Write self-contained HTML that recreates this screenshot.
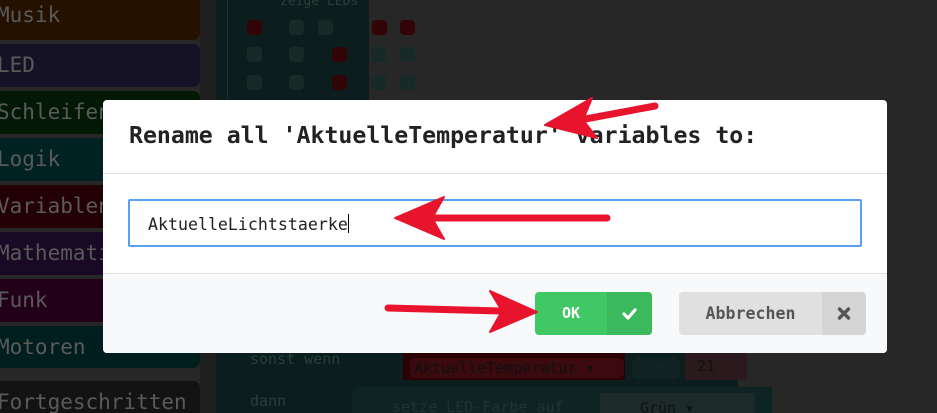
<!DOCTYPE html><html><head><style>
html,body{margin:0;width:937px;height:413px;overflow:hidden}
body{background:#272727;position:relative;font-family:"DejaVu Sans Mono","Liberation Mono",monospace}
.cat{position:absolute;left:0;width:200px;border-radius:0 7px 7px 0;color:#5a5a5a;font-size:21px;line-height:42px;text-indent:-3px;overflow:hidden;white-space:nowrap}
.abs{position:absolute}
.led{position:absolute;width:15px;height:15px;border-radius:4px;background:#172a28}
.led.r{background:#330407}
</style></head><body>
<div class="abs" style="left:200px;top:0;width:16px;height:413px;background:#1f1f1f"></div>
<div class="cat" style="top:-6px;height:46px;background:#241100">Musik</div>
<div class="cat" style="top:44px;height:43px;background:#151226">LED</div>
<div class="cat" style="top:91px;height:43px;background:#031805">Schleifen</div>
<div class="cat" style="top:138px;height:43px;background:#012222">Logik</div>
<div class="cat" style="top:185px;height:43px;background:#220003">Variablen</div>
<div class="cat" style="top:232px;height:43px;background:#190924">Mathematik</div>
<div class="cat" style="top:279px;height:43px;background:#22001a">Funk</div>
<div class="cat" style="top:326px;height:42px;background:#011e1e">Motoren</div>
<div class="cat" style="top:381px;height:40px;background:#131313">Fortgeschritten</div>
<div class="abs" style="left:216px;top:0;width:153px;height:100px;background:#0b1e1d"></div>
<div class="abs" style="left:227px;top:0;width:1px;height:100px;background:#1c302e"></div>
<div class="abs" style="left:280px;top:-6px;color:#2b3d3b;font-size:13px">zeige LEDs</div>
<div class="led r" style="left:247px;top:20px"></div><div class="led" style="left:289px;top:20px"></div><div class="led" style="left:318px;top:20px"></div><div class="led r" style="left:372px;top:20px"></div><div class="led r" style="left:400px;top:20px"></div>
<div class="led" style="left:247px;top:47px"></div><div class="led" style="left:289px;top:47px"></div><div class="led r" style="left:332px;top:47px"></div><div class="led" style="left:372px;top:47px"></div><div class="led" style="left:400px;top:47px"></div>
<div class="led" style="left:247px;top:75px"></div><div class="led" style="left:289px;top:75px"></div><div class="led r" style="left:332px;top:75px"></div><div class="led" style="left:372px;top:75px"></div><div class="led" style="left:400px;top:75px"></div>
<div class="abs" style="left:216px;top:353px;width:522px;height:60px;background:#0b1e1d"></div>
<div class="abs" style="left:250px;top:350px;color:#2b3d3b;font-size:15px">sonst wenn</div>
<div class="abs" style="left:250px;top:392px;color:#2b3d3b;font-size:15px">dann</div>
<div class="abs" style="left:403px;top:353px;width:222px;height:27px;background:#2a0206"></div>
<div class="abs" style="left:410px;top:358px;width:210px;height:20px;border-radius:5px;background:#3a0a0e;color:#111;font-size:15px;line-height:20px;padding-left:4px">AktuelleTemperatur ▾</div>
<div class="abs" style="left:632px;top:357px;width:42px;height:22px;border-radius:6px;background:#122;color:#222;font-size:14px;line-height:22px;padding-left:6px">&gt; ▾</div>
<div class="abs" style="left:685px;top:353px;width:50px;height:27px;background:#2b1a1d;color:#111;font-size:15px;line-height:27px;padding-left:12px">21</div>
<div class="abs" style="left:352px;top:387px;width:380px;height:26px;border-radius:8px 0 0 0;background:#0e2423;color:#1e3432;font-size:15px;line-height:40px;padding-left:40px;overflow:hidden">setze LED-Farbe auf</div>
<div class="abs" style="left:600px;top:393px;width:115px;height:20px;background:#1c2a29;color:#111;font-size:15px;line-height:30px;padding-left:40px;overflow:hidden">Grün ▾</div>

<div class="abs" style="left:103px;top:100px;width:784px;height:253px;background:#fff;border-radius:4px;overflow:hidden">
 <div class="abs" style="left:26px;top:22px;font-size:23.2px;font-weight:bold;color:#222;white-space:nowrap">Rename all 'AktuelleTemperatur' variables to:</div>
 <div class="abs" style="left:0;top:73px;width:784px;height:1px;background:#e0e0e0"></div>
 <div class="abs" style="left:25px;top:99px;width:730px;height:44px;border:2px solid #5aa0f0;border-radius:2px"></div>
 <div class="abs" style="left:45px;top:114px;font-size:16.6px;color:#222;white-space:nowrap">AktuelleLichtstaerke<span style="display:inline-block;width:1px;height:19px;background:#000;vertical-align:-3px"></span></div>
 <div class="abs" style="left:0;top:173px;width:784px;height:80px;background:#f8f9fa;border-top:1px solid #e0e0e0"></div>
 <div class="abs" style="left:432px;top:192px;width:117px;height:43px;border-radius:4px;background:#3fc863;overflow:hidden;font-weight:bold;color:#fff;font-size:15px">
  <div class="abs" style="left:0;top:0;width:72px;height:43px;line-height:43px;text-align:center">OK</div>
  <div class="abs" style="left:72px;top:0;width:45px;height:43px;background:#3aba5c">
   <svg width="45" height="43"><path d="M17 22 L21 26 L28 18" fill="none" stroke="#fff" stroke-width="3.2" stroke-linecap="round" stroke-linejoin="round"/></svg>
  </div>
 </div>
 <div class="abs" style="left:576px;top:192px;width:187px;height:43px;border-radius:4px;background:#e0e0e1;overflow:hidden;font-weight:bold;color:#555;font-size:16.6px">
  <div class="abs" style="left:0;top:0;width:143px;height:43px;line-height:43px;text-align:center">Abbrechen</div>
  <div class="abs" style="left:143px;top:0;width:44px;height:43px;background:#d5d5d6">
   <svg width="44" height="43"><path d="M17.5 17 L26.5 26 M26.5 17 L17.5 26" stroke="#555" stroke-width="3.4" stroke-linecap="round"/></svg>
  </div>
 </div>
</div>
<svg class="abs" style="left:0;top:0" width="937" height="413">
 <g fill="#e8132c" stroke="#e8132c" stroke-linecap="round">
  <line x1="655" y1="106" x2="580" y2="120" stroke-width="7"/>
  <polygon points="545,125 592,98 583,120 597,138" stroke-width="2" stroke-linejoin="round"/>
  <line x1="607" y1="218" x2="430" y2="218" stroke-width="7"/>
  <polygon points="395,218 444,197 432,218 444,239" stroke-width="2" stroke-linejoin="round"/>
  <line x1="388" y1="308" x2="500" y2="311" stroke-width="7"/>
  <polygon points="537,312 490,291 502,311 490,332" stroke-width="2" stroke-linejoin="round"/>
 </g>
</svg>
</body></html>
